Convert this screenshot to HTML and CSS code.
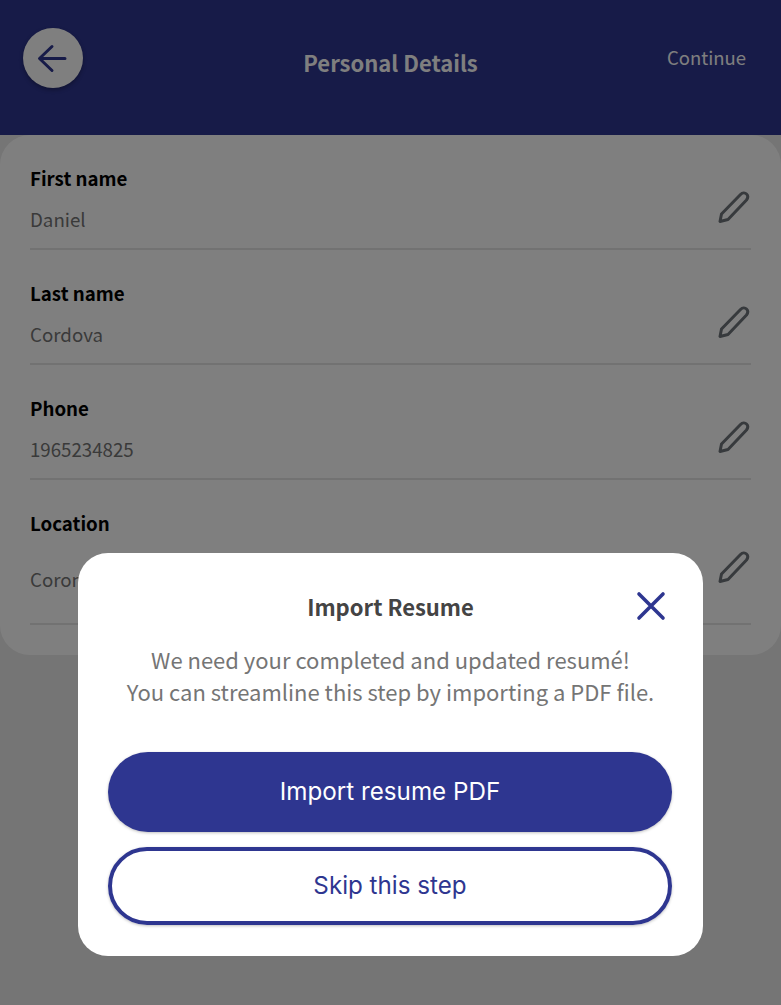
FILE: index.html
```html
<!DOCTYPE html>
<html lang="en">
<head>
    <meta charset="UTF-8">
    <meta name="viewport" content="width=device-width, initial-scale=1.0">
    <title>Personal Details</title>
    <link rel="stylesheet" href="styles.css">
</head>
<body>
    <!-- Header -->
    <header class="header">
        <button class="back-btn">
            <svg width="32" height="32" viewBox="0 0 32 32" fill="none" stroke="#2e3690" stroke-width="3" stroke-linecap="round" stroke-linejoin="round">
                <path d="M28 16.500H3M15 4.500L2.500 16.500L15 28.500"/>
            </svg>
        </button>
        <h1 class="header-title">Personal Details</h1>
        <a class="continue" href="#">Continue</a>
    </header>

    <!-- Fields -->
    <main class="sheet">
        <div class="field">
            <div class="field-text">
                <div class="field-label">First name</div>
                <div class="field-value">Daniel</div>
            </div>
            <svg class="edit" width="34" height="36" viewBox="0 0 34 36" fill="none" stroke="#6e747a" stroke-width="3" stroke-linejoin="round">
                <path d="M3 32.500l1.500-7.500L23.500 5.500c2-2 4.500-2 6-.5s1.500 4 0 6L11 30.500z"/>
            </svg>
        </div>
        <div class="field">
            <div class="field-text">
                <div class="field-label">Last name</div>
                <div class="field-value">Cordova</div>
            </div>
            <svg class="edit" width="34" height="36" viewBox="0 0 34 36" fill="none" stroke="#6e747a" stroke-width="3" stroke-linejoin="round">
                <path d="M3 32.500l1.500-7.500L23.500 5.500c2-2 4.500-2 6-.5s1.500 4 0 6L11 30.500z"/>
            </svg>
        </div>
        <div class="field">
            <div class="field-text">
                <div class="field-label">Phone</div>
                <div class="field-value">1965234825</div>
            </div>
            <svg class="edit" width="34" height="36" viewBox="0 0 34 36" fill="none" stroke="#6e747a" stroke-width="3" stroke-linejoin="round">
                <path d="M3 32.500l1.500-7.500L23.500 5.500c2-2 4.500-2 6-.5s1.500 4 0 6L11 30.500z"/>
            </svg>
        </div>
        <div class="field field-tall">
            <div class="field-text">
                <div class="field-label">Location</div>
                <div class="field-value">Corona</div>
            </div>
            <svg class="edit" width="34" height="36" viewBox="0 0 34 36" fill="none" stroke="#6e747a" stroke-width="3" stroke-linejoin="round">
                <path d="M3 32.500l1.500-7.500L23.500 5.500c2-2 4.500-2 6-.5s1.500 4 0 6L11 30.500z"/>
            </svg>
        </div>
    </main>

    <!-- Import dialog -->
    <div class="overlay">
        <div class="modal">
            <div class="modal-head">
                <h2 class="modal-title">Import Resume</h2>
                <button class="close-btn">
                    <svg width="30" height="30" viewBox="0 0 30 30" fill="none" stroke="#2e3690" stroke-width="3.6" stroke-linecap="round">
                        <path d="M3 3l24 24M27 3L3 27"/>
                    </svg>
                </button>
            </div>
            <p class="modal-text">We need your completed and updated resumé!<br>You can streamline this step by importing a PDF file.</p>
            <button class="btn btn-primary">Import resume PDF</button>
            <button class="btn btn-outline">Skip this step</button>
        </div>
    </div>
</body>
</html>
```

FILE: styles.css
```css
/* General Styles */
* {
    margin: 0;
    padding: 0;
    box-sizing: border-box;
}

body {
    font-family: "Noto Sans CJK SC", "Noto Sans", sans-serif;
    background: #ebebeb;
    height: 1005px;
    overflow: hidden;
}

button {
    background: none;
    border: none;
    font: inherit;
}

/* Header */
.header {
    height: 135px;
    background: #2e3690;
    padding: 28px 23px 0;
    display: grid;
    grid-template-columns: 1fr auto 1fr;
    align-items: start;
}

.back-btn {
    width: 60px;
    height: 60px;
    border-radius: 50%;
    background: #fff;
    box-shadow: 0 2px 4px rgba(0, 0, 0, 0.3);
    display: flex;
    justify-content: center;
    align-items: center;
}

.header-title {
    font-size: 22px;
    line-height: 30px;
    font-weight: 700;
    color: #fff;
    margin-top: 19px;
}

.continue {
    justify-self: end;
    font-size: 18.5px;
    line-height: 28px;
    color: #fff;
    text-decoration: none;
    margin: 15px 12px 0 0;
}

/* Fields */
.sheet {
    height: 520px;
    background: #fff;
    border-radius: 30px;
    padding: 0 30px;
}

.field {
    height: 115px;
    padding-top: 29px;
    border-bottom: 2px solid #e4e4e4;
    display: flex;
    justify-content: space-between;
    align-items: flex-start;
}

.field-tall {
    height: 145px;
}

.field-label {
    font-size: 18.7px;
    line-height: 28px;
    font-weight: 700;
    color: #000;
}

.field-value {
    font-size: 18.7px;
    line-height: 28px;
    color: #747474;
    margin-top: 13px;
}

.field-tall .field-value {
    margin-top: 28px;
}

.edit {
    margin-top: 25px;
}

.field-tall .edit {
    margin-top: 40px;
}

/* Import dialog */
.overlay {
    position: fixed;
    inset: 0;
    background: rgba(0, 0, 0, 0.5);
    display: flex;
    justify-content: center;
    align-items: flex-end;
    padding-bottom: 49px;
}

.modal {
    width: 625px;
    height: 403px;
    background: #fff;
    border-radius: 30px;
    padding: 35px 30px 0;
}

.modal-head {
    position: relative;
    text-align: center;
}

.modal-title {
    font-size: 22px;
    line-height: 36px;
    font-weight: 700;
    color: #444;
}

.close-btn {
    position: absolute;
    top: 3px;
    right: 7px;
    height: 30px;
}

.modal-text {
    margin-top: 19px;
    font-size: 22px;
    line-height: 32px;
    text-align: center;
    color: #757575;
}

.btn {
    display: block;
    width: 564px;
    border-radius: 40px;
    font-family: Inter, sans-serif;
    font-size: 24.2px;
    text-align: center;
}

.btn-primary {
    height: 80px;
    margin-top: 45px;
    padding-bottom: 2px;
    background: #2e3690;
    color: #fff;
    box-shadow: 0 1px 3px rgba(0, 0, 0, 0.25);
}

.btn-outline {
    height: 78px;
    margin-top: 15px;
    padding-bottom: 2px;
    border: 4px solid #2e3690;
    color: #2e3690;
    box-shadow: 0 1px 3px rgba(0, 0, 0, 0.25);
}
```
